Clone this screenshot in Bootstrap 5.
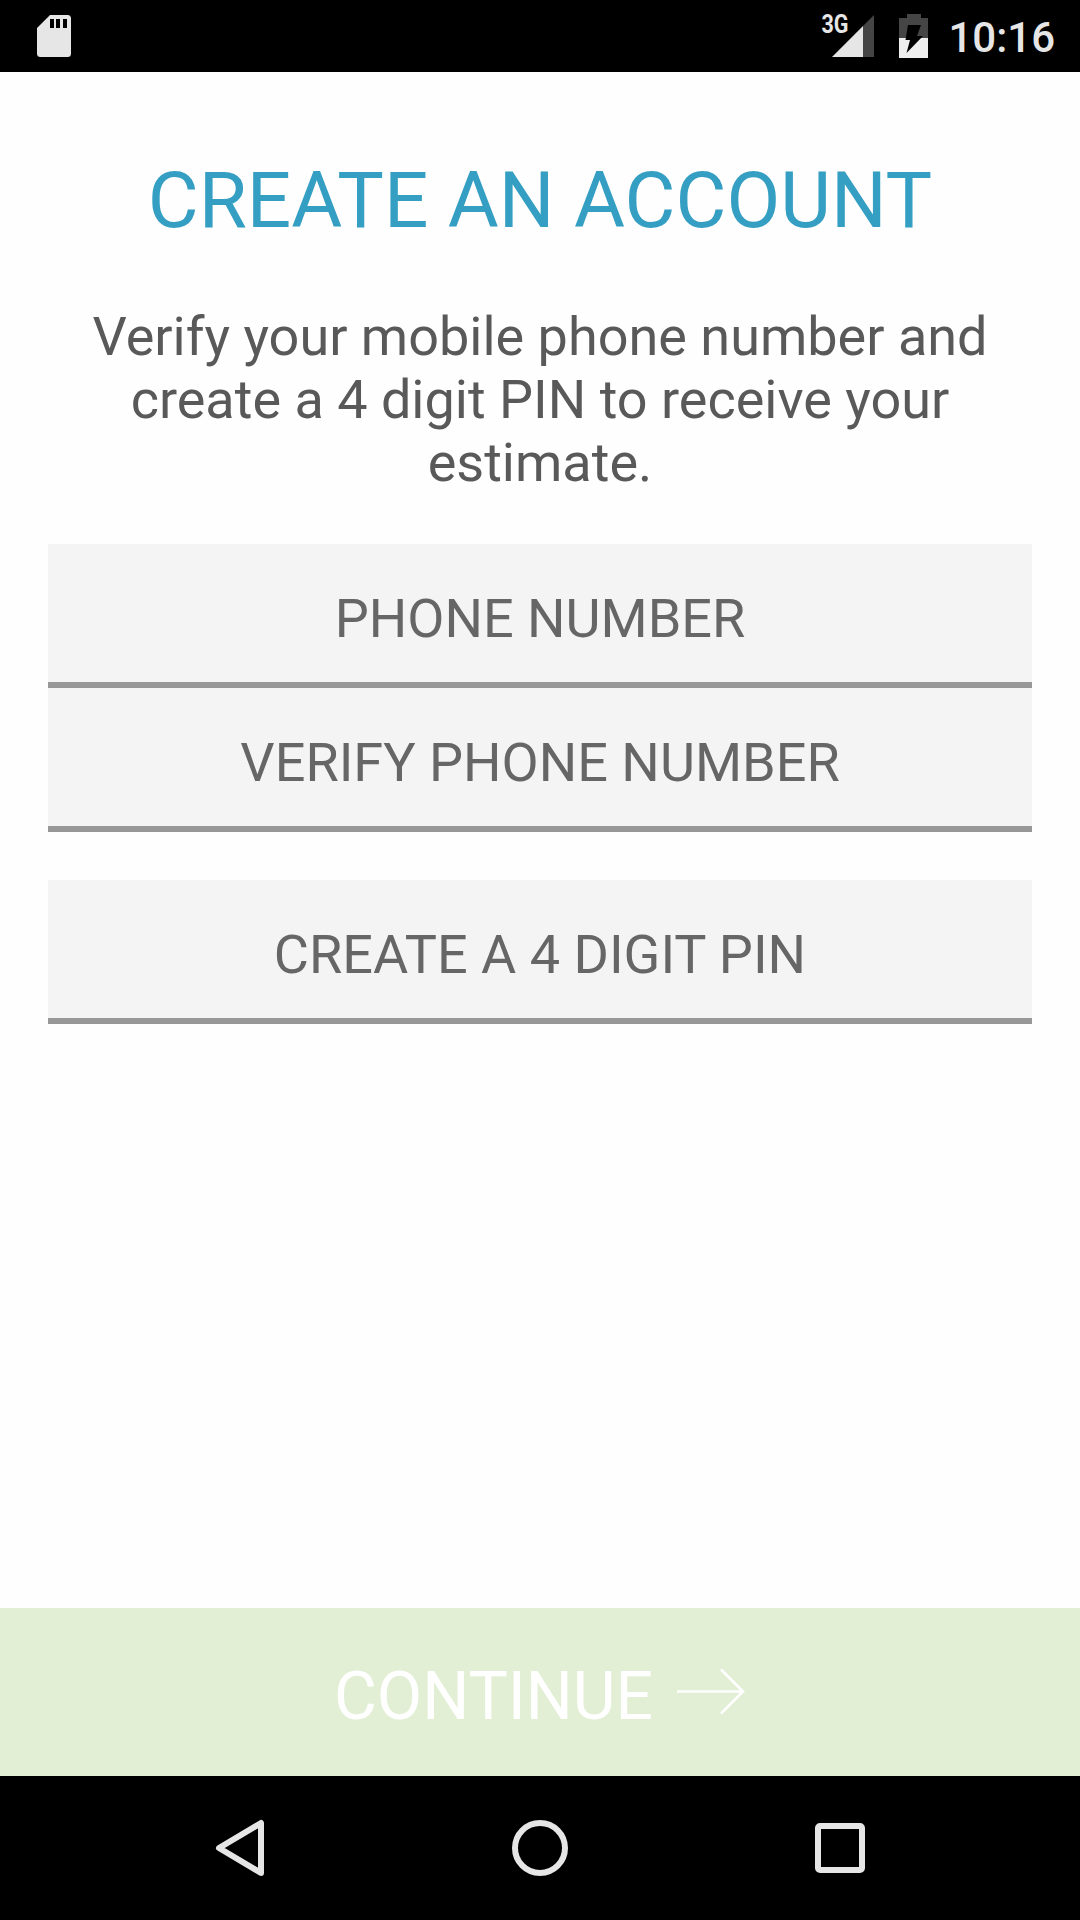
<!DOCTYPE html>
<html lang="en">
<head>
<meta charset="utf-8">
<meta name="viewport" content="width=device-width, initial-scale=1">
<title>Create an account</title>
<link href="https://cdn.jsdelivr.net/npm/bootstrap@5.3.0/dist/css/bootstrap.min.css" rel="stylesheet">
<style>
  body { font-family: Roboto, "Liberation Sans", sans-serif; height: 1920px; background: #fefefe; }
  .status-bar { height: 72px; padding: 0 25px 0 36px; background: #000; }
  .status-bar svg, .nav-keys svg, .btn-continue svg { display: block; flex: none; overflow: visible; }
  .clock { font-size: 42px; font-weight: 500; line-height: 50px; color: #e6e6e6; margin-left: 19px; padding-top: 3px; }
  .screen { padding: 82px 48px 0; }
  .screen-title { font-size: 78.2px; font-weight: 400; line-height: 92px; color: #349ec3; margin-bottom: 59px; }
  .intro { font-size: 54px; line-height: 63px; color: #595959; margin-bottom: 50px; }
  .form-control.field { height: 144px; padding: 43px 0 32px; font-size: 54px; line-height: 63px; background: #f4f4f4; border-bottom: 6px solid #979797 !important; }
  .field::placeholder { color: #666; opacity: 1; }
  .pin-field { margin-top: 48px; }
  .btn-continue { height: 168px; background: #e2efd5; color: #fff; font-size: 66px; line-height: 78px; gap: 23px; }
  .btn-continue span { padding-top: 9px; }
  .nav-keys { height: 144px; padding: 0 210px; background: #000; }
</style>
</head>
<body class="d-flex flex-column overflow-hidden">
  <header class="status-bar d-flex align-items-center">
    <svg width="36" height="44" viewBox="0 0 36 44"><path fill="#e6e6e6" d="M14 1h17.500a3.500 3.500 0 0 1 3.500 3.500v35a3.500 3.500 0 0 1-3.500 3.500h-27A3.500 3.500 0 0 1 1 39.500V14z"/><path d="M14 5h4v9h-4zM20 5h4v9h-4zM27 5h4v9h-4z"/></svg>
    <div class="d-flex align-items-center ms-auto">
      <svg width="54" height="52" viewBox="0 -4 54 52">
        <path fill="#e6e6e6" d="M11 43 42 12v31z"/><path fill="#454545" d="M42 12 53 1v42H42z"/>
        <text x="0.500" y="19" font-size="25.500" font-weight="700" fill="#e6e6e6" textLength="27" lengthAdjust="spacingAndGlyphs">3G</text>
      </svg>
      <svg class="ms-4" width="30" height="44" viewBox="0 0 30 44"><path fill="#454545" d="M8 0h14v4h7v20H0V4h8z"/><path fill="#eee" d="M0 24h29v20H0z"/><path d="M9 11h13l-4 11h6L7.500 39l3.500-13H6.500z"/></svg>
      <span class="clock">10:16</span>
    </div>
  </header>
  <main class="screen flex-grow-1 text-center">
    <h1 class="screen-title">CREATE AN ACCOUNT</h1>
    <p class="intro">Verify your mobile phone number and create a 4 digit PIN to receive your estimate.</p>
    <form>
      <input class="form-control field border-0 rounded-0 text-center" type="tel" placeholder="PHONE NUMBER" aria-label="Phone number">
      <input class="form-control field border-0 rounded-0 text-center" type="tel" placeholder="VERIFY PHONE NUMBER" aria-label="Verify phone number">
      <input class="form-control field pin-field border-0 rounded-0 text-center" type="text" placeholder="CREATE A 4 DIGIT PIN" aria-label="Create a 4 digit PIN">
    </form>
  </main>
  <button class="btn btn-continue border-0 rounded-0 w-100 p-0 d-flex align-items-center justify-content-center" type="button">
    <span>CONTINUE</span>
    <svg width="70" height="48" viewBox="0 0 70 48" fill="none" stroke="#fff" stroke-width="2.600"><path d="M1 23.500h66M45 1.500l22 22-22 22"/></svg>
  </button>
  <nav class="nav-keys d-flex align-items-center justify-content-between">
    <svg width="60" height="60" viewBox="0 0 60 60" fill="none" stroke="#e6e6e6" stroke-width="6" stroke-linejoin="round"><path d="M51 5v50L9 30z"/></svg>
    <svg width="60" height="60" viewBox="0 0 60 60" fill="none" stroke="#e6e6e6" stroke-width="6"><circle cx="30" cy="30" r="25"/></svg>
    <svg width="60" height="60" viewBox="0 0 60 60" fill="none" stroke="#e6e6e6" stroke-width="6"><rect x="8" y="8" width="44" height="44" rx="2"/></svg>
  </nav>
<script src="https://cdn.jsdelivr.net/npm/bootstrap@5.3.0/dist/js/bootstrap.bundle.min.js"></script>
</body>
</html>
